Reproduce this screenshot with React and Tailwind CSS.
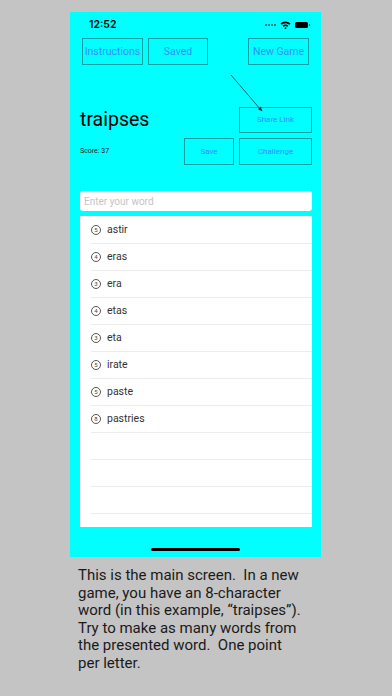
const words = [
  { n: 5, w: "astir" },
  { n: 4, w: "eras" },
  { n: 3, w: "era" },
  { n: 4, w: "etas" },
  { n: 3, w: "eta" },
  { n: 5, w: "irate" },
  { n: 5, w: "paste" },
  { n: 8, w: "pastries" },
  null,
  null,
  null,
];

function OutlineButton({ children, className = "" }) {
  return (
    <div
      className={
        "flex items-center justify-center border border-[#00a3a3] text-[#3b8cff] " +
        className
      }
    >
      {children}
    </div>
  );
}

function StatusIcons() {
  return (
    <div className="flex items-center gap-[4px]">
      <div className="flex items-end gap-[1px]">
        <span className="h-[2px] w-[2px] bg-[#0a8a8a]" />
        <span className="h-[2px] w-[2px] bg-[#0a8a8a]" />
        <span className="h-[2px] w-[2px] bg-[#0a8a8a]" />
        <span className="h-[2px] w-[2px] bg-[#0a8a8a]" />
      </div>
      <svg width="11" height="8" viewBox="0 0 11 8">
        <path d="M0.5 2.6 A7 7 0 0 1 10.5 2.6 L9.3 3.8 A5.3 5.3 0 0 0 1.7 3.8 Z" fill="#000" />
        <path d="M2.6 4.7 A4 4 0 0 1 8.4 4.7 L7.2 5.9 A2.3 2.3 0 0 0 3.8 5.9 Z" fill="#000" />
        <circle cx="5.5" cy="7.2" r="0.9" fill="#000" />
      </svg>
      <div className="flex items-center">
        <div className="h-[6px] w-[13px] rounded-[1.5px] bg-black" />
        <div className="ml-[1px] h-[2px] w-[1px] bg-[#333]" />
      </div>
    </div>
  );
}

function NumberBadge({ n }) {
  return (
    <span className="flex h-[10px] w-[10px] items-center justify-center rounded-full border border-[#555] text-[6px] leading-none text-[#444]">
      {n}
    </span>
  );
}

export default function App() {
  return (
    <div
      className="relative h-[696px] w-[392px] bg-[#c4c4c4] pt-[12px]"
      style={{ fontFamily: "Roboto, 'Liberation Sans', sans-serif" }}
    >
      <div className="relative ml-[70px] flex h-[545px] w-[251px] flex-col bg-[#00ffff]">
        {/* status bar */}
        <div className="flex h-[26px] items-center justify-between pl-[19px] pr-[11px]">
          <span className="text-[10.5px] font-semibold text-black" style={{ fontFamily: "Inter, sans-serif" }}>
            12:52
          </span>
          <StatusIcons />
        </div>

        {/* top buttons */}
        <div className="flex h-[27px] px-[12px] text-[10.5px]">
          <OutlineButton className="w-[61px]">Instructions</OutlineButton>
          <OutlineButton className="ml-[5px] w-[60px]">Saved</OutlineButton>
          <OutlineButton className="ml-auto w-[61px]">New Game</OutlineButton>
        </div>

        {/* word + share link */}
        <div className="mt-[42px] flex h-[26px] items-center justify-between pl-[10px] pr-[9px]">
          <span className="text-[19.5px] leading-none text-black">traipses</span>
          <OutlineButton className="h-[26px] w-[73px] text-[8px]">Share Link</OutlineButton>
        </div>

        {/* score + save/challenge */}
        <div className="mt-[5px] flex h-[27px] items-center pl-[10px] pr-[9px]">
          <span className="text-[7px] text-[#222]">Score: 37</span>
          <OutlineButton className="ml-auto h-[27px] w-[50px] text-[8px]">Save</OutlineButton>
          <OutlineButton className="ml-[5px] h-[27px] w-[73px] text-[8px]">Challenge</OutlineButton>
        </div>

        {/* input */}
        <div className="ml-[10px] mr-[9px] mt-[26px] flex h-[20px] items-center rounded-[3px] bg-white pl-[4px]">
          <span className="text-[10px] text-[#c4c4c4]">Enter your word</span>
        </div>

        {/* list */}
        <div className="ml-[10px] mr-[9px] mt-[5px] h-[311px] bg-white pt-[1px]">
          {words.map((item, i) => (
            <div key={i} className="ml-[11px] flex h-[27px] items-center gap-[6px] border-b border-[#ececec]">
              {item && (
                <>
                  <NumberBadge n={item.n} />
                  <span className="text-[10.5px] text-[#333]">{item.w}</span>
                </>
              )}
            </div>
          ))}
        </div>

        {/* home indicator */}
        <div className="mt-auto mb-[6px] flex justify-center">
          <div className="h-[3px] w-[89px] rounded-full bg-black" />
        </div>

        {/* annotation arrow */}
        <svg className="absolute left-0 top-0" width="251" height="120" viewBox="0 0 251 120">
          <line x1="161" y1="63" x2="191" y2="98" stroke="#1a3a3a" strokeWidth="0.8" />
          <path d="M192.5 99.5 L187.8 97.2 L190.6 94.8 Z" fill="#1a3a3a" />
        </svg>
      </div>

      <p className="ml-[78px] mt-[10px] w-[228px] text-[15px] leading-[17.5px] text-[#1a1a1a]">
        This is the main screen.&nbsp; In a new game, you have an 8-character word (in this example, “traipses”). Try
        to make as many words from the presented word.&nbsp; One point per letter.
      </p>
    </div>
  );
}
